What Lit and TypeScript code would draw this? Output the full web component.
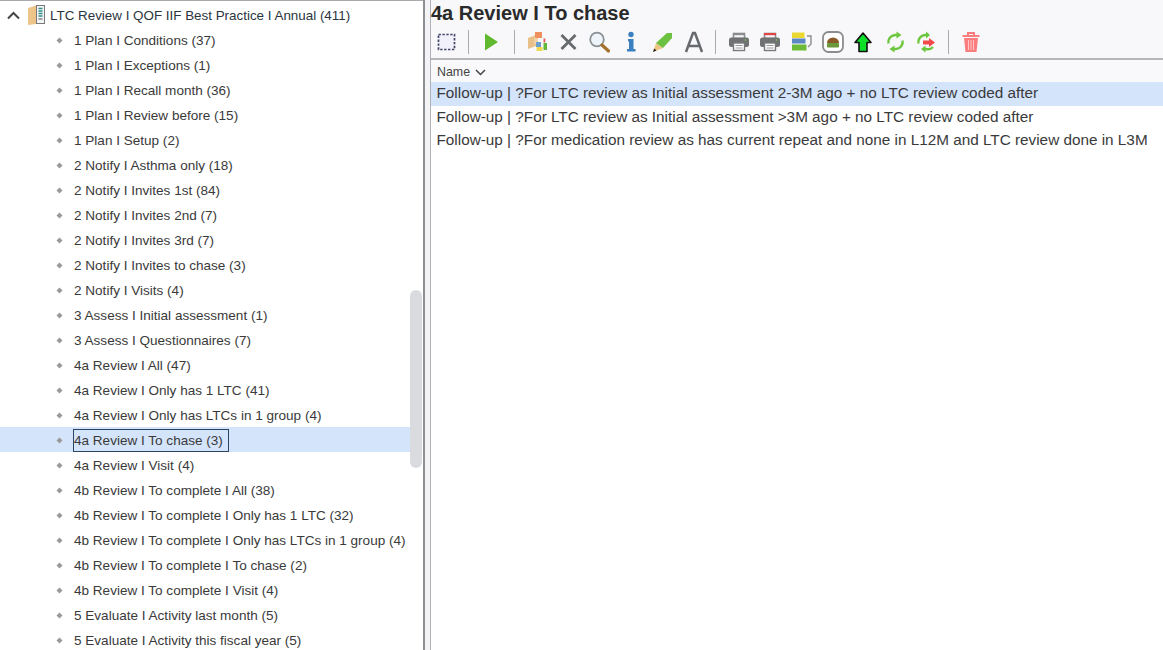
import { LitElement, html, css, svg } from "lit";
import { customElement } from "lit/decorators.js";

const ROWS = [
  "1 Plan I Conditions (37)","1 Plan I Exceptions (1)","1 Plan I Recall month (36)","1 Plan I Review before (15)","1 Plan I Setup (2)",
  "2 Notify I Asthma only (18)","2 Notify I Invites 1st (84)","2 Notify I Invites 2nd (7)","2 Notify I Invites 3rd (7)","2 Notify I Invites to chase (3)","2 Notify I Visits (4)",
  "3 Assess I Initial assessment (1)","3 Assess I Questionnaires (7)",
  "4a Review I All (47)","4a Review I Only has 1 LTC (41)","4a Review I Only has LTCs in 1 group (4)","4a Review I To chase (3)","4a Review I Visit (4)",
  "4b Review I To complete I All (38)","4b Review I To complete I Only has 1 LTC (32)","4b Review I To complete I Only has LTCs in 1 group (4)","4b Review I To complete I To chase (2)","4b Review I To complete I Visit (4)",
  "5 Evaluate I Activity last month (5)","5 Evaluate I Activity this fiscal year (5)",
];
const ITEMS = [
  "Follow-up | ?For LTC review as Initial assessment 2-3M ago + no LTC review coded after",
  "Follow-up | ?For LTC review as Initial assessment >3M ago + no LTC review coded after",
  "Follow-up | ?For medication review as has current repeat and none in L12M and LTC review done in L3M",
];

const ic = (body: unknown) => html`<div class="slot"><svg width="24" height="24" viewBox="0 0 24 24">${body}</svg></div>`;
const printer = (top: string) => svg`
  <rect x="6.500" y="3.500" width="11" height="5" fill="none" stroke="#8a8c8e" stroke-width="1.600"/>
  <rect x="2" y="7.500" width="20" height="9.500" rx="2.500" fill="#6f7173"/>
  <rect x="6" y="3" width="12" height="2.200" fill=${top}/>
  <circle cx="18.500" cy="10" r="0.900" fill="#7ab648"/>
  <rect x="6.500" y="13" width="11" height="7.500" fill="#fff" stroke="#77797b" stroke-width="1.400"/>
  <path d="M8.500 15.500h7M8.500 18h7" stroke="#999" stroke-width="1"/>`;

const ICONS = [
  ic(svg`<rect x="3.500" y="4.500" width="16" height="15" fill="#f1f1fc" stroke="#44446a" stroke-width="1.700" stroke-dasharray="2.400 1.500"/>`),
  "sep",
  ic(svg`<path d="M5 3.500 L18 12 L5 20.500 Z" fill="#5fb82e"/>`),
  "sep",
  ic(svg`<path d="M3 8l8-3v11l-8 3z" fill="#e8c088"/><path d="M9 5l4-1v9l-4 2z" fill="#f2d3a8"/>
    <rect x="10" y="2" width="7" height="6" fill="#ee9060"/><rect x="11.500" y="17" width="6" height="4" fill="#f0d850"/>
    <rect x="11" y="12" width="5" height="5" fill="#6a9fd0"/><rect x="18.500" y="13" width="3.500" height="7" fill="#62b83a"/><rect x="18.500" y="8.500" width="1.800" height="4" fill="#e05a5a"/>`),
  ic(svg`<path d="M4.500 5 L18.500 19 M18.500 5 L4.500 19" stroke="#666a6c" stroke-width="2.800"/>`),
  ic(svg`<circle cx="9" cy="9.500" r="6.800" fill="#eef5fa" stroke="#8a9094" stroke-width="1.800"/><path d="M14 15 L20.500 21" stroke="#a5722e" stroke-width="3.200" stroke-linecap="round"/>`),
  ic(svg`<circle cx="12" cy="4.500" r="2.700" fill="#3a7fc0"/><path d="M9 9h5.500v10h2v2.500H8v-2.500h2v-7.500H9z" fill="#3a7fc0"/>`),
  ic(svg`<path d="M3 22 L6 13 L13 18 Z" fill="#eec684"/><path d="M3 22 L4.200 18.500 L6.500 20.500 Z" fill="#222"/><path d="M6 13 L17 3 L22 3 L22 8 L13 18 Z" fill="#6cc240"/>`),
  ic(svg`<path d="M4 22 L11 3 H13 L20 22 M7 16 H17" fill="none" stroke="#666a6c" stroke-width="2.500"/>`),
  "sep",
  ic(printer("#8a8c8e")),
  ic(printer("#e04444")),
  ic(svg`<rect x="2" y="2.500" width="12.500" height="5.500" fill="#ecd832"/><rect x="2" y="8.500" width="13.500" height="5" fill="#5b88c4"/><rect x="2" y="14.500" width="14.500" height="6" fill="#6cbb38"/><path d="M17 6h4v8l-3 3" fill="none" stroke="#8a8c8e" stroke-width="1.400"/>`),
  ic(svg`<rect x="2" y="2" width="20" height="20" rx="5.500" fill="#fff" stroke="#8a8c8e" stroke-width="1.800"/><path d="M6 13 a6 5.500 0 0 1 12 0 z" fill="#8a5a28"/><rect x="6" y="13" width="12" height="4.500" rx="1" fill="#6a9a38"/>`),
  ic(svg`<path d="M11 3 L19 12.500 H15 V21.500 H7 V12.500 H3 Z" fill="#0ee02a" stroke="#111" stroke-width="1.600" stroke-linejoin="round"/>`),
  ic(svg`<path d="M4.500 13.500 A7 7 0 0 1 11 5 h2 M18.500 10.500 A7 7 0 0 1 12 19 h-2" fill="none" stroke="#6cc63e" stroke-width="2.400"/><path d="M12.500 1.500 L17.500 5 L12.500 8.500 Z M10.500 15.500 L5.500 19 L10.500 22.500 Z" fill="#6cc63e"/>`),
  ic(svg`<path d="M3.500 13.500 A7 7 0 0 1 10 5 h1 M18 17 A7 7 0 0 1 11 19 h-1" fill="none" stroke="#6cc63e" stroke-width="2.400"/><path d="M11 1.500 L15 5 L11 8.500 Z M10.500 15.500 L6 19 L10.500 22.500 Z" fill="#6cc63e"/><path d="M8 10.500h6V8l6 4.500-6 4.500v-2.500H8z" fill="#f04a4a"/>`),
  "sep",
  ic(svg`<path d="M2.500 6 H19.500 M8 5 V3 H14 V5" fill="none" stroke="#fb7c7c" stroke-width="2"/><path d="M4 8 H18 L16.500 22 H5.500 Z" fill="#fb7c7c"/><path d="M8.500 10 V20 M11 10 V20 M13.500 10 V20" stroke="#ffc4c4" stroke-width="1"/>`),
];

@customElement("app-root")
export class AppRoot extends LitElement {
  static styles = css`
    :host { display: flex; width: 1163px; height: 650px; overflow: hidden; background: #fff;
      font-family: "Liberation Sans", Arial, sans-serif; color: #333; }
    .left { position: relative; width: 423px; flex: none; padding-top: 1px; border-top: 1px solid #a8aaad; box-sizing: border-box; overflow: hidden; }
    .root { height: 25px; box-sizing: border-box; padding: 1px 0 0 7px; display: flex; align-items: center; font-size: 13.4px; color: #2b3540; white-space: nowrap; }
    .root svg { flex: none; }
    .chev { margin-right: 7px; }
    .folder { margin-right: 3px; }
    .row { height: 25px; box-sizing: border-box; padding: 1px 0 0 56px; margin-right: 13px; display: flex; align-items: center; font-size: 13.55px; color: #3a3a3a; white-space: nowrap; }
    .row.sel { background: #d4e4fb; }
    .dot { width: 7px; height: 7px; margin-right: 11px; flex: none; }
    .row span { padding: 3px 1px 3px 0; border: 1px solid transparent; margin-left: -1px; line-height: 15px; }
    .row.sel span { border-color: #2b4560; padding-right: 5px; }
    .thumb { position: absolute; left: 410px; top: 289px; width: 12px; height: 178px; border-radius: 6px; background: #d9dbde; }
    .splitter { width: 8px; flex: none; background: #f4f4f6; border-left: 2px solid #8c9095; border-right: 1px solid #b0b2b6; box-sizing: border-box; }
    .right { flex: 1; min-width: 0; background: #f8f8fa; display: flex; flex-direction: column; }
    h1 { margin: 0; font-size: 20px; line-height: 26px; font-weight: 700; color: #2a2a2a; }
    .bar { height: 32px; display: flex; align-items: center; flex: none; }
    .slot { width: 31.3px; display: flex; justify-content: center; flex: none; }
    .slot svg { display: block; }
    .sep { width: 1px; height: 24px; background: #a8aaad; margin: 0 7px 0 6px; flex: none; }
    .list { flex: 1; background: #fff; border-top: 2px solid #b4b6ba; }
    .head { height: 22px; box-sizing: border-box; padding: 2px 0 0 6px; display: flex; align-items: center; font-size: 12.4px; color: #444; gap: 5px; background: #f9f9fb; }
    .item { height: 23.700px; line-height: 22px; padding-left: 5.500px; font-size: 15.3px; color: #3a3a3a; white-space: nowrap; }
    .item.sel { background: #d4e4fb; }
  `;

  render() {
    return html`
      <div class="left">
        <div class="root">
          <svg class="chev" width="13" height="9" viewBox="0 0 13 9"><path d="M1 7.500 L6.500 2 L12 7.500" fill="none" stroke="#444" stroke-width="2"/></svg>
          <svg class="folder" width="20" height="22" viewBox="0 0 20 22">
            <path d="M1 4 L9 1.500 V20 L1 21 Z" fill="#edc48a"/>
            <rect x="9.500" y="1.500" width="8" height="18" fill="#f4f4f4" stroke="#77797b"/>
            <path d="M11.500 4.500h4M11.500 7h4M11.500 9.500h4M11.500 12h4" stroke="#2f8f8a" stroke-width="1.300"/>
            <path d="M11.500 15h4" stroke="#777" stroke-width="1.300"/>
          </svg>
          LTC Review I QOF IIF Best Practice I Annual (411)
        </div>
        ${ROWS.map((r) => html`<div class="row ${r.startsWith("4a Review I To chase") ? "sel" : ""}">
          <svg class="dot" viewBox="0 0 7 7"><path d="M3.500 0.500 L6.500 3.500 L3.500 6.500 L0.500 3.500 Z" fill="#9a9a9a"/></svg>
          <span>${r}</span></div>`)}
        <div class="thumb"></div>
      </div>
      <div class="splitter"></div>
      <div class="right">
        <h1>4a Review I To chase</h1>
        <div class="bar">${ICONS.map((i) => (i === "sep" ? html`<div class="sep"></div>` : i))}</div>
        <div class="list">
          <div class="head">Name
            <svg width="11" height="7" viewBox="0 0 11 7"><path d="M1 1 L5.500 5.500 L10 1" fill="none" stroke="#444" stroke-width="1.500"/></svg>
          </div>
          ${ITEMS.map((t, i) => html`<div class="item ${i === 0 ? "sel" : ""}">${t}</div>`)}
        </div>
      </div>`;
  }
}
